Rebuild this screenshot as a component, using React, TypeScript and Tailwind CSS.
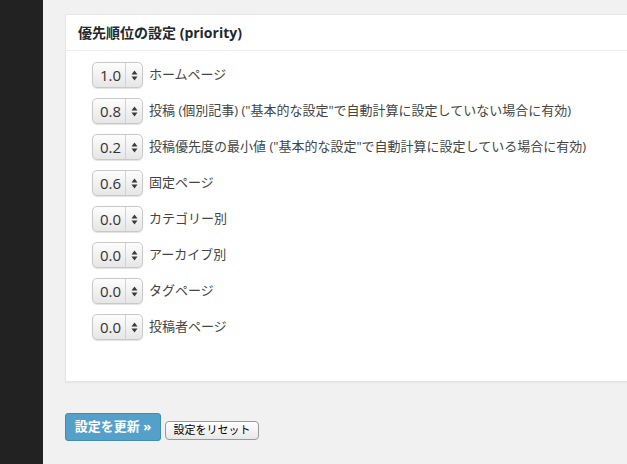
import { ChangeEvent, useState } from "react";

interface PriorityRow {
    id: string;
    value: string;
    label: string;
}

const rows: PriorityRow[] = [
    { id: "home", value: "1.0", label: "ホームページ" },
    {
        id: "post",
        value: "0.8",
        label: '投稿 (個別記事) ("基本的な設定"で自動計算に設定していない場合に有効)',
    },
    {
        id: "min",
        value: "0.2",
        label: '投稿優先度の最小値 ("基本的な設定"で自動計算に設定している場合に有効)',
    },
    { id: "page", value: "0.6", label: "固定ページ" },
    { id: "cats", value: "0.0", label: "カテゴリー別" },
    { id: "arch", value: "0.0", label: "アーカイブ別" },
    { id: "tags", value: "0.0", label: "タグページ" },
    { id: "auth", value: "0.0", label: "投稿者ページ" },
];

const options = ["0.0", "0.1", "0.2", "0.3", "0.4", "0.5", "0.6", "0.7", "0.8", "0.9", "1.0"];

const PrioritySelect = ({
    value,
    onChange,
}: {
    value: string;
    onChange: (v: string) => void;
}) => {
    return (
        <div className="relative w-[51px] h-[26px] shrink-0 rounded-[5px] border border-[#c8c8c8] bg-gradient-to-b from-[#fdfdfd] to-[#e6e6e6] shadow-[0_1px_1px_rgba(0,0,0,0.12)]">
            <select
                value={value}
                onChange={(e: ChangeEvent<HTMLSelectElement>) => onChange(e.target.value)}
                className="absolute inset-0 w-full h-full opacity-0 cursor-pointer"
            >
                {options.map((o) => (
                    <option key={o} value={o}>
                        {o}
                    </option>
                ))}
            </select>
            <div className="pointer-events-none flex h-full items-center">
                <span className="w-[32px] pl-[7px] text-[15px] leading-none text-[#333]">
                    {value}
                </span>
                <span className="h-full w-px bg-[#d2d2d2]" />
                <svg width="7" height="11" viewBox="0 0 7 11" className="ml-[5px]">
                    <path d="M3.5 0.5 L6.5 4.5 L0.5 4.5 Z" fill="#3a3a3a" />
                    <path d="M3.5 10.5 L6.5 6.5 L0.5 6.5 Z" fill="#3a3a3a" />
                </svg>
            </div>
        </div>
    );
};

const App = () => {
    const [values, setValues] = useState<Record<string, string>>(
        Object.fromEntries(rows.map((r) => [r.id, r.value]))
    );

    return (
        <div
            className="flex w-[627px] h-[464px] overflow-hidden bg-[#f1f1f1]"
            style={{ fontFamily: '"Open Sans", "Noto Sans CJK JP", sans-serif' }}
        >
            <div className="w-[43px] shrink-0 bg-[#222]" />

            <div className="flex flex-col pl-[22px] pt-[14px]">
                <div className="w-[620px] bg-white border border-[#e5e5e5] shadow-[0_1px_1px_rgba(0,0,0,0.04)]">
                    <h3 className="h-[36px] flex items-center pl-[12px] border-b border-[#eee] text-[14px] font-bold text-[#23282d]">
                        優先順位の設定 (priority)
                    </h3>

                    <div className="flex flex-col gap-[10px] pl-[26px] pt-[11px] pb-[41px]">
                        {rows.map((r) => (
                            <div key={r.id} className="flex items-center gap-[6px]">
                                <PrioritySelect
                                    value={values[r.id]}
                                    onChange={(v) => setValues({ ...values, [r.id]: v })}
                                />
                                <label className="text-[13px] text-[#444] whitespace-nowrap">
                                    {r.label}
                                </label>
                            </div>
                        ))}
                    </div>
                </div>

                <div className="flex items-end gap-[4px] mt-[31px]">
                    <button className="h-[28px] w-[96px] rounded-[3px] border border-[#3f8cb6] bg-[#55a0c9] text-[13px] font-bold text-white">
                        設定を更新 »
                    </button>
                    <button className="h-[19px] w-[94px] mb-[1px] rounded-[4px] border border-[#9a9a9a] bg-gradient-to-b from-white to-[#e8e8e8] text-[11px] text-black">
                        設定をリセット
                    </button>
                </div>
            </div>
        </div>
    );
};

export default App;
